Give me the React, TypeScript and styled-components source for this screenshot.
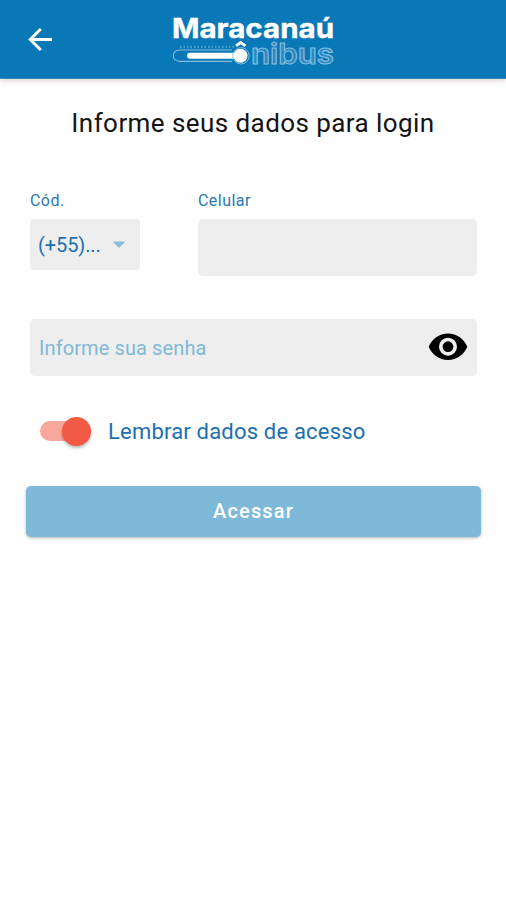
import React, { useState } from "react";
import styled, { createGlobalStyle } from "styled-components";

const GlobalStyle = createGlobalStyle`
  *, *::before, *::after { box-sizing: border-box; }
  body { margin: 0; background: #fefefe; font-family: Roboto, sans-serif; }
  button, input { font-family: inherit; }
`;

const Screen = styled.div`
  width: 100%;
  min-height: 900px;
  display: flex;
  flex-direction: column;
`;

const AppBar = styled.header`
  height: 79px;
  display: grid;
  grid-template-columns: 80px 1fr 80px;
  align-items: center;
  background: #0878b7;
  border-bottom: 1px solid #3d86bb;
  box-shadow: 0 2px 5px rgba(90, 50, 40, 0.2);
`;

const BackButton = styled.button`
  width: 80px;
  height: 78px;
  padding: 0;
  border: 0;
  background: none;
  display: flex;
  align-items: center;
  justify-content: center;
`;

const Logo = styled.svg`
  display: block;
  width: 170px;
  height: 78px;
  justify-self: center;
  font-family: Inter, sans-serif;
`;

const Title = styled.h1`
  margin: 28px 0 0;
  font-size: 26px;
  line-height: 32px;
  font-weight: 400;
  letter-spacing: 0.43px;
  text-align: center;
  color: #141414;
  white-space: nowrap;
`;

const Form = styled.form`
  display: flex;
  flex-direction: column;
  padding: 51px 25px 0 26px;
`;

const PhoneRow = styled.div`
  display: grid;
  grid-template-columns: 110px 279px;
  column-gap: 58px;
  align-items: start;
  margin-left: 4px;
`;

const Label = styled.label`
  display: block;
  height: 29px;
  font-size: 16px;
  line-height: 21px;
  letter-spacing: 0.45px;
  color: #2b78b5;
`;

const CodeSelect = styled.button`
  width: 110px;
  height: 51px;
  padding: 1px 14px 0 8px;
  border: 0;
  border-radius: 4px;
  background: #eeeeee;
  display: flex;
  align-items: center;
  justify-content: space-between;
  font-size: 20px;
  letter-spacing: -0.1px;
  color: #1d6fb0;
`;

const Field = styled.div<{ $wide?: boolean }>`
  height: 57px;
  margin: ${(p) => (p.$wide ? "43px 4px 0" : "0")};
  padding: 0 9px 2px;
  border-radius: 5px;
  background: #eeeeee;
  display: flex;
  align-items: center;
`;

const Input = styled.input`
  flex: 1;
  min-width: 0;
  height: 100%;
  padding: 2px 0 0;
  border: 0;
  outline: 0;
  background: transparent;
  color: #1d6fb0;
  font-size: 20px;
  letter-spacing: 0.1px;
  &::placeholder { color: #7fb8d9; opacity: 1; }
`;

const IconButton = styled.button`
  padding: 0;
  border: 0;
  background: none;
  display: flex;
`;

const RememberRow = styled.div`
  display: flex;
  align-items: center;
  height: 34px;
  margin: 38px 0 0 14px;
  gap: 17px;
`;

const SwitchTrack = styled.button<{ $on: boolean }>`
  width: 45px;
  height: 20px;
  margin-right: 6px;
  padding: 0;
  border: 0;
  border-radius: 10px;
  background: #f9a79c;
  display: flex;
  align-items: center;
  justify-content: ${(p) => (p.$on ? "flex-end" : "flex-start")};
`;

const SwitchThumb = styled.span`
  flex: none;
  width: 29px;
  height: 29px;
  margin: 0 -6px;
  border-radius: 50%;
  background: #f25a45;
  box-shadow: 0 2px 3px rgba(0, 0, 0, 0.28);
`;

const RememberText = styled.span`
  padding-top: 2px;
  font-size: 22px;
  line-height: 30px;
  letter-spacing: 0.19px;
  color: #1d6fb0;
  white-space: nowrap;
`;

const SubmitButton = styled.button`
  height: 51px;
  margin-top: 38px;
  padding: 0 0 1px;
  border: 0;
  border-radius: 5px;
  background: #7eb9da;
  box-shadow: 0 1px 3px rgba(0, 0, 0, 0.3);
  color: #ffffff;
  font-size: 20px;
  font-weight: 500;
  letter-spacing: 1.15px;
`;

function BrandLogo() {
  return (
    <Logo viewBox="168 0 170 78" role="img" aria-label="Maracanaú Ônibus">
      <text x="172" y="38" fontSize="27" fontWeight="700" fill="#fff" stroke="#fff" strokeWidth="0.4" textLength="162" lengthAdjust="spacingAndGlyphs">
        Maracanaú
      </text>
      <path d="M180 47H234" fill="none" stroke="#4c9dce" strokeWidth="2.5" strokeDasharray="1.5 2" />
      <path d="M232 50H179a5.7 5.7 0 0 0 0 11.4H232" fill="none" stroke="#84bcde" strokeWidth="1.1" />
      <path d="M190 55.7H235" stroke="#fff" strokeWidth="6" strokeLinecap="round" />
      <circle cx="241" cy="55.8" r="8.2" fill="none" stroke="#84bcde" strokeWidth="1" />
      <circle cx="240.5" cy="55.8" r="7" fill="#fff" />
      <path d="M236 45.8l4.7-3.3 4.7 3.3" fill="none" stroke="#fff" strokeWidth="2.8" />
      <text x="251" y="64" fontSize="28" fontWeight="600" fill="#2b8ac3" stroke="#84bcde" strokeWidth="1.1" textLength="83" lengthAdjust="spacingAndGlyphs">
        nibus
      </text>
    </Logo>
  );
}

export default function App() {
  const [remember, setRemember] = useState(true);
  const [visible, setVisible] = useState(false);

  return (
    <Screen>
      <GlobalStyle />
      <AppBar>
        <BackButton aria-label="Voltar">
          <svg width="24" height="24" viewBox="0 0 24 24" fill="none" stroke="#fff" strokeWidth="3">
            <path d="M24 12.5H3M12.8 2L2.3 12.5 12.8 23" />
          </svg>
        </BackButton>
        <BrandLogo />
      </AppBar>
      <Title>Informe seus dados para login</Title>
      <Form onSubmit={(e) => e.preventDefault()}>
        <PhoneRow>
          <div>
            <Label>Cód.</Label>
            <CodeSelect type="button">
              (+55)...
              <svg width="14" height="8" viewBox="0 0 14 8">
                <path d="M0.5 0.5h13L7 7z" fill="#8dbdd8" />
              </svg>
            </CodeSelect>
          </div>
          <div>
            <Label htmlFor="phone">Celular</Label>
            <Field>
              <Input id="phone" type="tel" />
            </Field>
          </div>
        </PhoneRow>
        <Field $wide>
          <Input type={visible ? "text" : "password"} placeholder="Informe sua senha" />
          <IconButton type="button" aria-label="Mostrar senha" onClick={() => setVisible(!visible)}>
            <svg width="40" height="28" viewBox="0 0 40 28">
              <path
                fill="#000"
                fillRule="evenodd"
                d="M20 0.5C11.2 0.5 3.7 6 0.7 13.7 3.7 21.4 11.2 26.9 20 26.9s16.3-5.5 19.3-13.2C36.3 6 28.8 0.5 20 0.5zm0 22.2a9 9 0 1 1 0-18 9 9 0 0 1 0 18zm0-3.6a5.4 5.4 0 1 0 0-10.8 5.4 5.4 0 0 0 0 10.8z"
              />
            </svg>
          </IconButton>
        </Field>
        <RememberRow>
          <SwitchTrack type="button" role="switch" aria-checked={remember} $on={remember} onClick={() => setRemember(!remember)}>
            <SwitchThumb />
          </SwitchTrack>
          <RememberText>Lembrar dados de acesso</RememberText>
        </RememberRow>
        <SubmitButton type="submit">Acessar</SubmitButton>
      </Form>
    </Screen>
  );
}
